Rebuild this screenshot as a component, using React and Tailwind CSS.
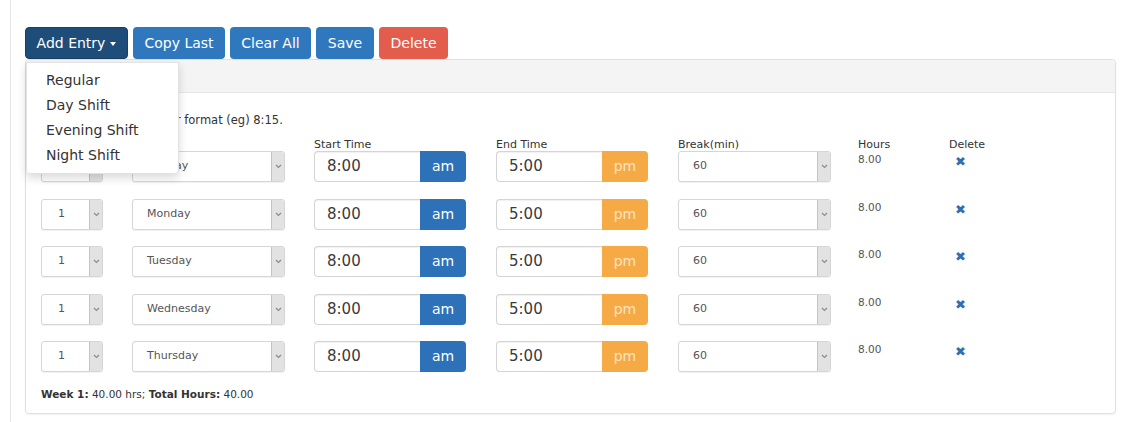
import React from 'react';

const rows = [
  { week: '1', day: 'Sunday' },
  { week: '1', day: 'Monday' },
  { week: '1', day: 'Tuesday' },
  { week: '1', day: 'Wednesday' },
  { week: '1', day: 'Thursday' },
];

function Chevron() {
  return (
    <svg width="7" height="5" viewBox="0 0 7 5" fill="none">
      <path d="M1 1l2.5 2.5L6 1" stroke="#8a8a8a" strokeWidth="1.1" />
    </svg>
  );
}

function Select({ value, width, pad }) {
  return (
    <div
      className={`flex h-[31px] ${width} overflow-hidden rounded-[3px] border border-[#d6d6d6] bg-white shadow-[0_1px_1px_rgba(0,0,0,0.06)]`}
    >
      <span className={`flex flex-1 items-center ${pad} text-[11px] text-[#555]`}>{value}</span>
      <span className="flex w-[13px] items-center justify-center border-l border-[#c4c4c4] bg-[#e2e2e2]">
        <Chevron />
      </span>
    </div>
  );
}

function TimeInput({ value, suffix, tone }) {
  return (
    <div className="flex h-[31px] w-[152px]">
      <div className="flex w-[106px] items-center rounded-l-[4px] border border-r-0 border-[#d4d4d4] bg-white pl-[12px] text-[15px] text-[#3a3a3a] shadow-[inset_0_1px_1px_rgba(0,0,0,0.06)]">
        {value}
      </div>
      <div
        className={`flex flex-1 items-center justify-center rounded-r-[4px] text-[14px] ${
          tone === 'am' ? 'bg-[#2d72b8] text-white' : 'bg-[#f5aa45] text-[#fbe3c2]'
        }`}
      >
        {suffix}
      </div>
    </div>
  );
}

export default function App() {
  return (
    <div className="h-[422px] overflow-hidden bg-white pl-[10px] font-['DejaVu_Sans',Verdana,sans-serif]">
      <div className="h-full border-l border-[#e6e6e6] pl-[14px] pr-[9px] pt-[27px]">
        <div className="relative flex gap-[5px]">
          <button className="flex h-[32px] w-[103px] items-center justify-center gap-[5px] rounded-[4px] border border-[#1a3f66] bg-[#1f4d7a] text-[14px] text-white">
            Add Entry
            <span className="mt-[2px] h-0 w-0 border-x-[3px] border-t-[4px] border-x-transparent border-t-white" />
          </button>
          <button className="h-[32px] w-[92px] rounded-[4px] bg-[#2f78bd] text-[14px] text-white">Copy Last</button>
          <button className="h-[32px] w-[81px] rounded-[4px] bg-[#2f78bd] text-[14px] text-white">Clear All</button>
          <button className="h-[32px] w-[58px] rounded-[4px] bg-[#2f78bd] text-[14px] text-white">Save</button>
          <button className="h-[32px] w-[69px] rounded-[4px] bg-[#e35d4c] text-[14px] text-white">Delete</button>

          <div className="absolute left-[1px] top-[35px] z-10 w-[153px] rounded-b-[4px] border border-[#e2e2e2] bg-white py-[5px] shadow-[0_4px_10px_rgba(0,0,0,0.15)]">
            {['Regular', 'Day Shift', 'Evening Shift', 'Night Shift'].map((item) => (
              <div key={item} className="flex h-[25px] items-center pl-[19px] text-[14px] text-[#333]">
                {item}
              </div>
            ))}
          </div>
        </div>

        <div className="h-[355px] rounded-[4px] border border-[#e0e0e0] shadow-[0_1px_2px_rgba(0,0,0,0.06)]">
          <div className="h-[33px] rounded-t-[4px] border-b border-[#e6e6e6] bg-[#f4f4f4]" />
          <div className="pl-[15px] pt-[19px]">
            <p className="text-[11.5px] leading-[16px] text-[#333]">Enter times in a 12 hour format (eg) 8:15.</p>

            <div className="mt-[11px] flex h-[12px] items-center text-[11px] text-[#333]">
              <span className="w-[273px]" />
              <span className="w-[182px]">Start Time</span>
              <span className="w-[182px]">End Time</span>
              <span className="w-[180px]">Break(min)</span>
              <span className="w-[91px]">Hours</span>
              <span>Delete</span>
            </div>

            <div>
              {rows.map((row) => (
                <div key={row.day} className="flex h-[47.5px] items-start">
                  <div className="w-[91px]">
                    <Select value={row.week} width="w-[62px]" pad="pl-[16px]" />
                  </div>
                  <div className="w-[182px]">
                    <Select value={row.day} width="w-[153px]" pad="pl-[14px]" />
                  </div>
                  <div className="w-[182px]">
                    <TimeInput value="8:00" suffix="am" tone="am" />
                  </div>
                  <div className="w-[182px]">
                    <TimeInput value="5:00" suffix="pm" tone="pm" />
                  </div>
                  <div className="w-[180px]">
                    <Select value="60" width="w-[153px]" pad="pl-[14px]" />
                  </div>
                  <div className="w-[91px] pt-[1px] text-[10.5px] text-[#555]">8.00</div>
                  <div className="pl-[6px] pt-[4px] text-[13px] font-bold leading-none text-[#2d6fb0]">✖</div>
                </div>
              ))}
            </div>

            <p className="mt-[-2px] text-[10.5px] text-[#333]">
              <b>Week 1:</b> 40.00 hrs; <b>Total Hours:</b> 40.00
            </p>
          </div>
        </div>
      </div>
    </div>
  );
}
